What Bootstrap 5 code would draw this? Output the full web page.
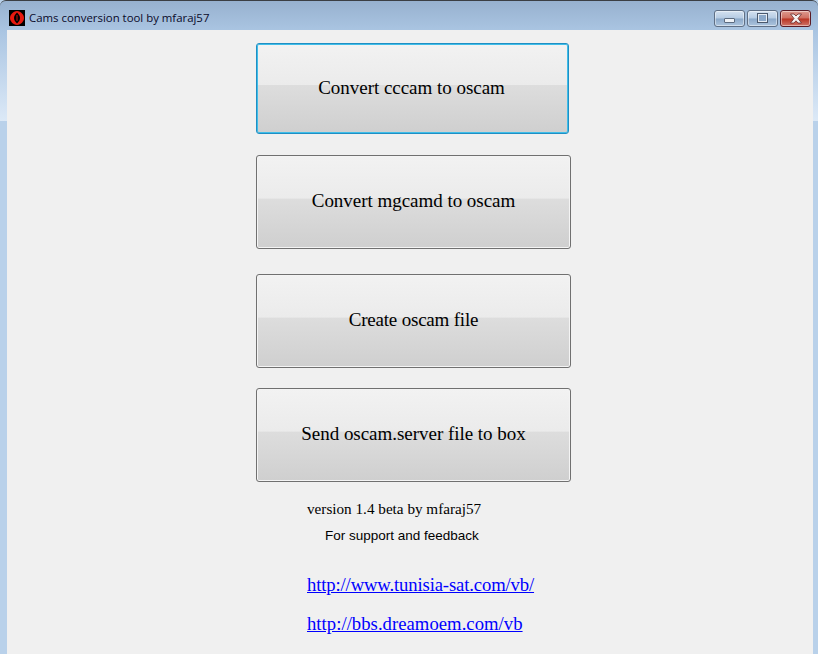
<!DOCTYPE html>
<html lang="en">
<head>
<meta charset="utf-8">
<title>Cams conversion tool by mfaraj57</title>
<link rel="stylesheet" href="https://cdn.jsdelivr.net/npm/bootstrap@5.3.0/dist/css/bootstrap.min.css">
<style>
html,body{height:100%;margin:0;overflow:hidden;background:#b9d1ea}
.aero-window{width:818px;height:654px;background:linear-gradient(180deg,#97b1cf 0,#aac5e2 30px,#dce9f7 120px,#b9d1ea 120px,#b9d1ea 100%);border-top:1px solid #3b3f44;border-radius:6px 6px 0 0;padding:0 5px 0 7px}
.aero-title{height:29px;padding-top:5px;color:#0a0a2a;font:11.4px/1 "Open Sans","Noto Sans",sans-serif}
.aero-icon{width:16px;height:16px;margin:0 4px 0 2px;background:#000;flex:none}
.aero-ctrls{margin:0 2px 0 auto;gap:2px}
.aero-ctl{height:17px;width:31px;border:1px solid #5f6f85;border-radius:3px;background:linear-gradient(180deg,#d4e1f0 0,#b5cbe3 48%,#8ba8c9 52%,#adc5de 100%);box-shadow:inset 0 0 0 1px rgba(255,255,255,.45)}
.aero-ctl.ctl-close{border-color:#5a1a24;background:linear-gradient(180deg,#dd9a8f 0,#cf6e60 48%,#b93322 52%,#cf7468 100%)}
.ctl-min{width:11px;height:5px;margin-top:5px;background:#eef2f7;border:1px solid #5c6b80;border-radius:1px}
.ctl-max{width:11px;height:10px;background:#8ba8c9;border:2px solid #e6ecf3;outline:1px solid #4a586c;outline-offset:-1px}
.aero-client{height:624px;background:#f0f0f0;padding:13px 0 0 249px}
.wf-btn{display:flex;align-items:center;justify-content:center;width:315px;height:94px;padding:0 0 3px;border:1px solid #707070;border-radius:3px;color:#000;font:19px/1 "Liberation Serif",serif;letter-spacing:-.03px;background:linear-gradient(180deg,#f2f2f2 0,#ebebeb 46%,#dddddd 46.500%,#cfcfcf 100%);box-shadow:inset 0 0 0 1px #f4f4f4}
.wf-btn:hover{color:#000;border-color:#707070}
.wf-focus{width:313px;height:91px;padding:0 2px 2px 0;border-color:#1f8fc4;box-shadow:inset 0 0 0 1px #3fbde8}
.wf-tight{letter-spacing:-.2px}
.gap-a{margin-top:21px}.gap-b{margin-top:25px}.gap-c{margin-top:20px}
.ver-text{margin:18px 0 0 51px;font:15.2px/18px "Liberation Serif",serif;color:#000}
.sup-text{margin:10px 0 0 69px;font:13.500px/16px "Liberation Sans",sans-serif;color:#000}
.lnk{margin-left:51px;font:18.67px/22px "Liberation Serif",serif}
.lnk a{color:#0000ff}
.lnk-a{margin-top:30px;letter-spacing:-.13px}.lnk-b{margin-top:17px;letter-spacing:.04px}
</style>
</head>
<body>
<div class="aero-window">
  <div class="aero-title d-flex align-items-center">
    <svg class="aero-icon" viewBox="0 0 16 16" aria-hidden="true">
      <path fill="#e8190f" d="M8 1C4 1.500 1 4.500 1 8s3 6.500 7 7c4-.5 7-3.500 7-7s-3-6.500-7-7z"/>
      <path fill="#000" d="M8 2.500C6 4.500 5 6 5 8s1 3.500 3 5.500c2-2 3-3.500 3-5.500s-1-3.500-3-5.500z"/>
      <path fill="#a5100b" d="M7.400 5h1.200v6H7.400z"/>
    </svg>
    <span>Cams conversion tool by mfaraj57</span>
    <div class="aero-ctrls d-flex">
      <div class="aero-ctl d-flex justify-content-center align-items-center"><div class="ctl-min"></div></div>
      <div class="aero-ctl d-flex justify-content-center align-items-center"><div class="ctl-max"></div></div>
      <div class="aero-ctl ctl-close d-flex justify-content-center align-items-center">
        <svg width="14" height="11" viewBox="0 0 14 11" aria-hidden="true"><path d="M1.500 1H5l2 2 2-2h3.500L9 5.500l3.500 4.500H9L7 7.800 5 10H1.500L5 5.500z" fill="#f4f0f0" stroke="#6b2a2a" stroke-width=".8"/></svg>
      </div>
    </div>
  </div>
  <div class="aero-client">
    <button class="btn wf-btn wf-focus" type="button">Convert cccam to oscam</button>
    <button class="btn wf-btn gap-a" type="button">Convert mgcamd to oscam</button>
    <button class="btn wf-btn gap-b wf-tight" type="button">Create oscam file</button>
    <button class="btn wf-btn gap-c" type="button">Send oscam.server file to box</button>
    <div class="ver-text">version 1.4 beta by mfaraj57</div>
    <div class="sup-text">For support and feedback</div>
    <div class="lnk lnk-a"><a href="#">http://www.tunisia-sat.com/vb/</a></div>
    <div class="lnk lnk-b"><a href="#">http://bbs.dreamoem.com/vb</a></div>
  </div>
</div>
<script src="https://cdn.jsdelivr.net/npm/bootstrap@5.3.0/dist/js/bootstrap.bundle.min.js"></script>
</body>
</html>
